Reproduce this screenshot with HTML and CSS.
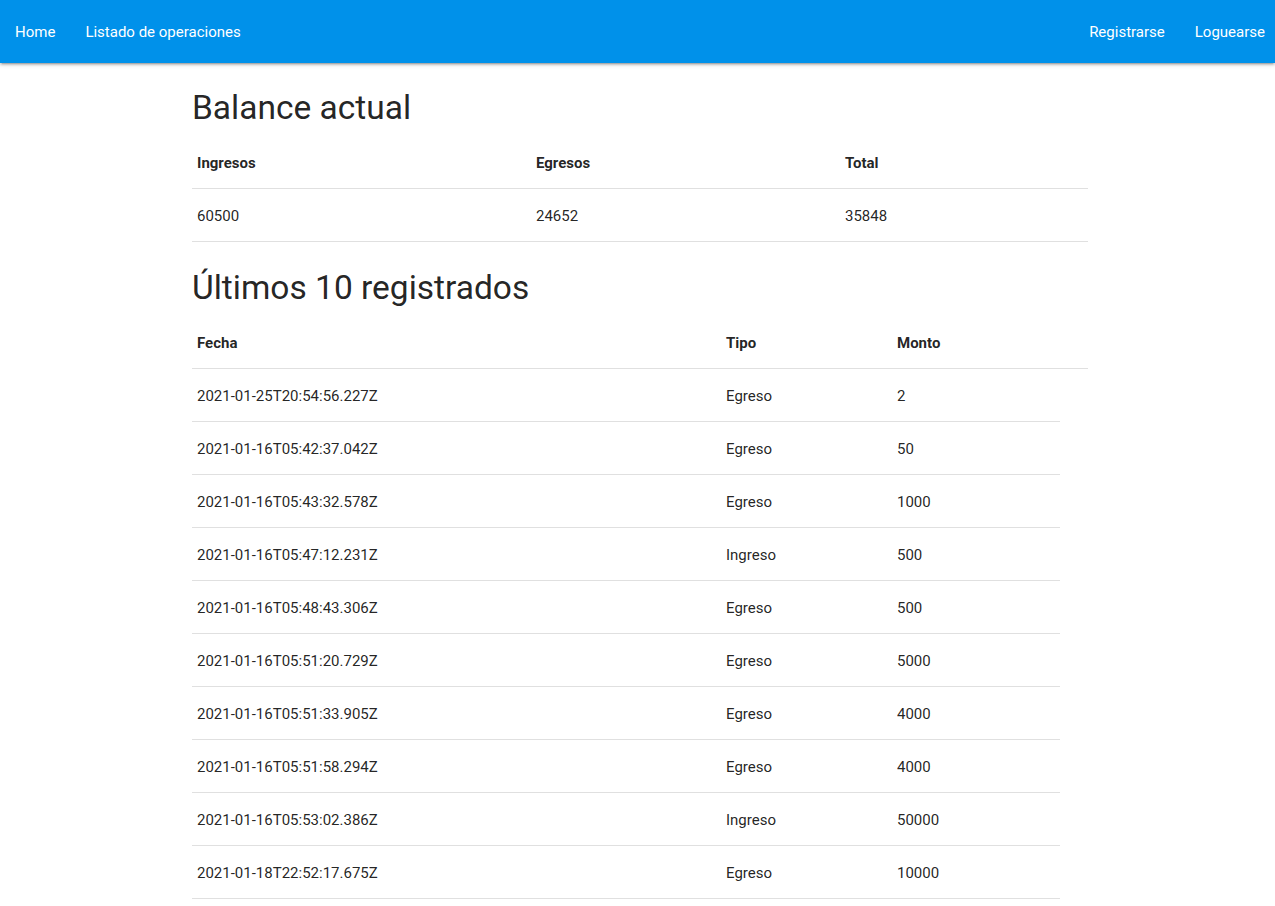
FILE: index.html
```html
<!DOCTYPE html>
<html lang="es">
<head>
<meta charset="utf-8">
<title>Balance</title>
<link rel="stylesheet" href="styles.css">
</head>
<body>
<nav class="navbar">
  <ul class="nav-list">
    <li><a href="#">Home</a></li>
    <li><a href="#">Listado de operaciones</a></li>
  </ul>
  <ul class="nav-list nav-right">
    <li><a href="#">Registrarse</a></li>
    <li><a href="#">Loguearse</a></li>
  </ul>
</nav>
<main class="container">
  <h4 class="title">Balance actual</h4>
  <table class="table balance">
    <thead>
      <tr><th class="c-ing">Ingresos</th><th class="c-egr">Egresos</th><th class="c-tot">Total</th></tr>
    </thead>
    <tbody>
      <tr><td>60500</td><td>24652</td><td>35848</td></tr>
    </tbody>
  </table>
  <h4 class="title title-second">Últimos 10 registrados</h4>
  <table class="table ultimos">
    <thead>
      <tr><th class="c-fecha">Fecha</th><th class="c-tipo">Tipo</th><th class="c-monto">Monto</th><th class="c-extra"></th></tr>
    </thead>
    <tbody>
      <tr><td>2021-01-25T20:54:56.227Z</td><td>Egreso</td><td>2</td></tr>
      <tr><td>2021-01-16T05:42:37.042Z</td><td>Egreso</td><td>50</td></tr>
      <tr><td>2021-01-16T05:43:32.578Z</td><td>Egreso</td><td>1000</td></tr>
      <tr><td>2021-01-16T05:47:12.231Z</td><td>Ingreso</td><td>500</td></tr>
      <tr><td>2021-01-16T05:48:43.306Z</td><td>Egreso</td><td>500</td></tr>
      <tr><td>2021-01-16T05:51:20.729Z</td><td>Egreso</td><td>5000</td></tr>
      <tr><td>2021-01-16T05:51:33.905Z</td><td>Egreso</td><td>4000</td></tr>
      <tr><td>2021-01-16T05:51:58.294Z</td><td>Egreso</td><td>4000</td></tr>
      <tr><td>2021-01-16T05:53:02.386Z</td><td>Ingreso</td><td>50000</td></tr>
      <tr><td>2021-01-18T22:52:17.675Z</td><td>Egreso</td><td>10000</td></tr>
    </tbody>
  </table>
</main>
</body>
</html>
```
FILE: styles.css
```css
html, body {
  margin: 0;
  padding: 0;
}
body {
  font-family: Roboto, "Noto Sans", sans-serif;
  font-size: 15px;
  line-height: 1.5;
  color: rgba(0, 0, 0, 0.87);
  background: #fff;
}
.navbar {
  display: flex;
  justify-content: space-between;
  align-items: stretch;
  height: 63px;
  background: #0091ea;
  box-shadow: 0 2px 2px 0 rgba(0,0,0,0.14), 0 3px 1px -2px rgba(0,0,0,0.12), 0 1px 5px 0 rgba(0,0,0,0.2);
  position: relative;
  z-index: 1;
}
.nav-list {
  display: flex;
  list-style: none;
  margin: 0;
  padding: 0;
}
.nav-list a {
  display: block;
  padding: 0 15px;
  line-height: 64px;
  color: #fff;
  text-decoration: none;
  font-size: 15px;
}
.nav-right li:last-child a {
  padding-right: 10px;
}
.container {
  width: 896px;
  margin-left: 192px;
}
.title {
  font-size: 33.5px;
  font-weight: 400;
  line-height: 37px;
  margin: 26px 0 10px;
}
.title-second {
  margin-top: 27px;
}
.table {
  width: 896px;
  border-collapse: collapse;
  border-spacing: 0;
}
.table th,
.table td {
  padding: 16px 5px 14px;
  line-height: 22px;
  text-align: left;
  vertical-align: middle;
}
.table th {
  font-weight: 700;
  border-bottom: 1px solid rgba(0, 0, 0, 0.12);
}
.table td {
  border-bottom: 1px solid rgba(0, 0, 0, 0.12);
}
.c-ing { width: 329px; }
.c-egr { width: 299px; }
.c-tot { width: 238px; }
.c-fecha { width: 519px; }
.c-tipo { width: 161px; }
.c-monto { width: 158px; }
.c-extra { width: 18px; }
```
